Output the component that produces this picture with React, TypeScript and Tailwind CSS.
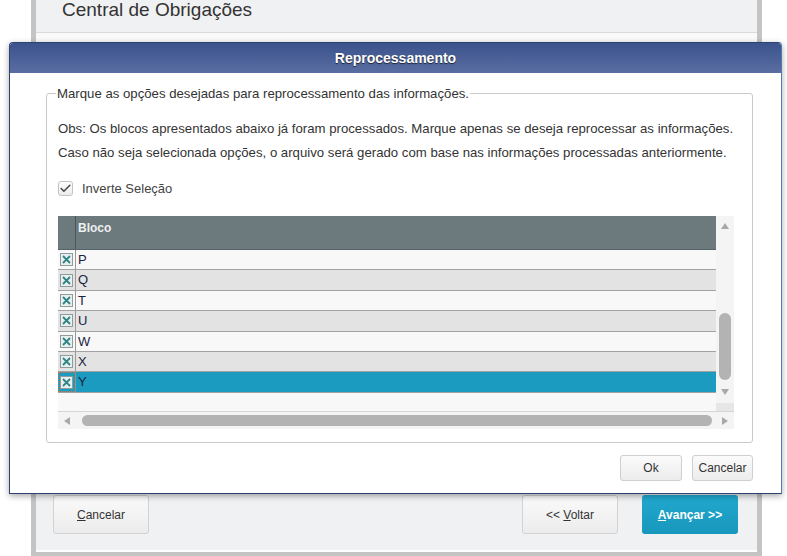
import { Check } from "lucide-react";

const blocos = ["P", "Q", "T", "U", "W", "X", "Y"];

function CheckCell({ selected }: { selected: boolean }) {
  return (
    <div
      className={`w-[18px] shrink-0 flex items-center justify-center border-r border-[#9a9a9a] ${
        selected ? "bg-[#1a9bbf] outline outline-1 outline-dotted outline-[#e0703c] -outline-offset-1" : ""
      }`}
    >
      <svg width="13" height="13" viewBox="0 0 13 13">
        <rect x="0.5" y="0.5" width="12" height="12" fill="#e9eeee" stroke="#8e9c9c" />
        <path d="M3 3 L10 10 M10 3 L3 10" stroke="#2f8585" strokeWidth="1.8" />
      </svg>
    </div>
  );
}

function App() {
  return (
    <div className="relative w-[787px] h-[556px] overflow-hidden bg-white font-['Liberation_Sans',Arial,sans-serif]">
      {/* pagina de fundo */}
      <div className="ml-[31px] w-[731px] h-full border-x-[5px] border-b-[4px] border-[#c4c4c4] flex flex-col">
        <div className="h-[33px] bg-[#f0f1f2] border-b border-[#dadada] pl-[26px]">
          <h1 className="text-[19px] leading-[20px] text-[#333]">Central de Obrigações</h1>
        </div>
        <div className="flex-1 bg-[#fafafa]" />
        <div className="h-[80px] bg-[#f0f1f2] flex items-end justify-between pl-[17px] pr-[19px] pb-[16px] border-b-2 border-white">
          <button className="w-[96px] h-[39px] rounded-[3px] border border-[#d3d3d3] bg-gradient-to-b from-[#fafafa] to-[#ececec] text-[12px] text-[#333]">
            <span className="underline">C</span>ancelar
          </button>
          <div className="flex gap-[24px]">
            <button className="w-[96px] h-[39px] rounded-[3px] border border-[#d3d3d3] bg-gradient-to-b from-[#fafafa] to-[#ececec] text-[12px] text-[#333]">
              &lt;&lt; <span className="underline">V</span>oltar
            </button>
            <button className="w-[96px] h-[39px] rounded-[3px] bg-gradient-to-b from-[#22a8cf] to-[#1797bb] text-[12px] font-bold text-white">
              <span className="underline">A</span>vançar &gt;&gt;
            </button>
          </div>
        </div>
      </div>

      {/* dialogo */}
      <div className="absolute left-[9px] top-[42px] w-[773px] h-[452px] bg-white border border-[#2d4470] border-r-[#4d7db3] rounded-t-[4px] shadow-[0_2px_6px_rgba(0,0,0,0.35)] flex flex-col">
        <div className="h-[30px] shrink-0 rounded-t-[3px] bg-gradient-to-b from-[#3b528c] to-[#5a6ea2] flex items-center justify-center">
          <span className="text-[14px] font-bold text-white [text-shadow:0_1px_1px_rgba(0,0,0,0.7)]">
            Reprocessamento
          </span>
        </div>

        <fieldset className="ml-[36px] mt-[13px] w-[707px] h-[357px] border border-[#c9c9c9] rounded-[3px] px-[11px]">
          <legend className="ml-[-2px] px-[1px] text-[13.2px] leading-[15px] text-[#333]">
            Marque as opções desejadas para reprocessamento das informações.
          </legend>
          <div className="mt-[16px] text-[13.2px] leading-[24px] text-[#333]">
            <p>Obs: Os blocos apresentados abaixo já foram processados. Marque apenas se deseja reprocessar as informações.</p>
            <p>Caso não seja selecionada opções, o arquivo será gerado com base nas informações processadas anteriormente.</p>
          </div>
          <label className="mt-[16px] flex items-center gap-[9px] h-[15px] text-[13px] text-[#444]">
            <span className="w-[15px] h-[15px] rounded-[3px] border border-[#c3c3c3] bg-gradient-to-b from-white to-[#ececec] flex items-center justify-center">
              <Check size={13} strokeWidth={3} className="text-[#4a4a4a]" />
            </span>
            Inverte Seleção
          </label>

          {/* grid */}
          <div className="mt-[20px] w-[676px] h-[213px] flex flex-col bg-[#f8f8f8]">
            <div className="flex h-[195px]">
              <div className="w-[658px] flex flex-col">
                <div className="h-[34px] shrink-0 flex bg-[#6c797d] border-b border-[#56626a]">
                  <div className="w-[18px] border-r border-[#4c575b]" />
                  <div className="pl-[2px] pt-[3px] text-[12px] font-bold text-[#eef0f0]">Bloco</div>
                </div>
                {blocos.map((b, i) => {
                  const selected = b === "Y";
                  return (
                    <div
                      key={b}
                      className={`flex h-[20.4px] border-b border-[#a2a2a2] ${
                        selected ? "bg-[#1a9bbf]" : i % 2 === 0 ? "bg-[#f8f8f8]" : "bg-[#e3e3e3]"
                      }`}
                    >
                      <CheckCell selected={selected} />
                      <div className="pl-[2px] text-[13px] leading-[20px] text-[#1c2340]">{b}</div>
                    </div>
                  );
                })}
              </div>
              {/* barra vertical */}
              <div className="w-[18px] bg-[#f4f4f4] flex flex-col items-center">
                <svg width="8" height="6" viewBox="0 0 8 6" className="mt-[7px]">
                  <path d="M4 0 L8 6 L0 6 Z" fill="#a9a9a9" />
                </svg>
                <div className="mt-[84px] w-[12px] h-[67px] rounded-[6px] bg-[#b3b3b3]" />
                <svg width="8" height="6" viewBox="0 0 8 6" className="mt-[9px]">
                  <path d="M0 0 L8 0 L4 6 Z" fill="#a9a9a9" />
                </svg>
                <div className="mt-auto w-full h-[8px] bg-[#e6e6e6]" />
              </div>
            </div>
            {/* barra horizontal */}
            <div className="h-[18px] border-t border-[#d5d5d5] bg-[#f4f4f4] flex items-center pl-[6px] pr-[6px]">
              <svg width="6" height="8" viewBox="0 0 6 8">
                <path d="M6 0 L6 8 L0 4 Z" fill="#a9a9a9" />
              </svg>
              <div className="ml-[12px] w-[630px] h-[11px] rounded-[6px] bg-[#b3b3b3]" />
              <svg width="6" height="8" viewBox="0 0 6 8" className="ml-auto">
                <path d="M0 0 L6 4 L0 8 Z" fill="#a9a9a9" />
              </svg>
            </div>
          </div>
        </fieldset>

        <div className="mt-[12px] mr-[28px] flex justify-end gap-[10px]">
          <button className="w-[62px] h-[26px] rounded-[3px] border border-[#cfcfcf] bg-gradient-to-b from-[#fbfbfb] to-[#ececec] text-[12px] text-[#333]">
            Ok
          </button>
          <button className="w-[61px] h-[26px] rounded-[3px] border border-[#cfcfcf] bg-gradient-to-b from-[#fbfbfb] to-[#ececec] text-[12px] text-[#333]">
            Cancelar
          </button>
        </div>
      </div>
    </div>
  );
}

export default App;
